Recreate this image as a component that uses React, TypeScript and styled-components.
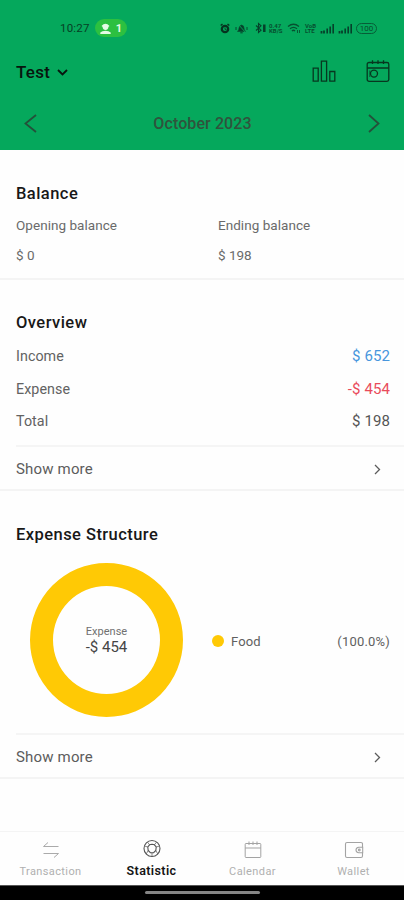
import React from "react";
import styled, { createGlobalStyle } from "styled-components";

const GlobalStyle = createGlobalStyle`
  * { box-sizing: border-box; }
  body { margin: 0; background: #fff; font-family: Roboto, "Liberation Sans", sans-serif; }
`;

const Screen = styled.div`
  width: 404px;
  height: 900px;
  display: flex;
  flex-direction: column;
  background: #fefefe;
  color: #555;
  overflow: hidden;
`;

const Header = styled.header`
  height: 150px;
  flex: none;
  background: #05a85c;
  color: #08150e;
`;

const StatusBar = styled.div`
  height: 48px;
  padding: 8px 27px 0 60px;
  display: flex;
  align-items: center;
`;

const Clock = styled.span`
  width: 35px;
  font-size: 11.5px;
  letter-spacing: 0.2px;
  color: #073f25;
`;

const Pill = styled.span`
  display: flex;
  align-items: center;
  justify-content: center;
  gap: 5px;
  width: 32px;
  height: 18px;
  border-radius: 9px;
  background: #2cc040;
  color: #e4fbe5;
  font-size: 11px;
  font-weight: 700;
`;

const StatusIcons = styled.div`
  margin-left: auto;
  display: flex;
  align-items: center;
`;

const StatusSlot = styled.span<{ $w: number }>`
  width: ${(p) => p.$w}px;
  height: 12px;
  display: flex;
  align-items: center;
`;

const TinyText = styled.span`
  font-size: 6px;
  line-height: 5.5px;
  font-weight: 700;
  color: #075030;
  white-space: nowrap;
`;

const Battery = styled.span`
  width: 21px;
  height: 11px;
  border: 1px solid #075d37;
  border-radius: 5.5px;
  font-size: 8px;
  line-height: 9px;
  text-align: center;
  color: #074b2c;
`;

const Toolbar = styled.div`
  height: 48px;
  padding: 0 14px 0 16px;
  display: flex;
  align-items: center;
`;

const AccountName = styled.span`
  font-size: 17px;
  font-weight: 500;
  letter-spacing: 0.3px;
  margin-right: 7px;
`;

const ToolbarActions = styled.div`
  margin-left: auto;
  display: flex;
  gap: 30px;
`;

const MonthBar = styled.div`
  height: 54px;
  padding: 1px 24px 0;
  display: flex;
  align-items: center;
  justify-content: space-between;
  color: #24513a;
`;

const Month = styled.span`
  font-size: 16px;
  font-weight: 500;
  letter-spacing: 0.1px;
  color: #30533d;
`;

const Section = styled.section<{ $h: number }>`
  height: ${(p) => p.$h}px;
  flex: none;
  border-bottom: 2px solid #f4f4f4;
  display: flex;
  flex-direction: column;
`;

const Title = styled.h2<{ $top: number; $spacing: number }>`
  margin: ${(p) => p.$top}px 0 0 16px;
  font-size: 16.5px;
  line-height: 20px;
  font-weight: 500;
  letter-spacing: ${(p) => p.$spacing}px;
  color: #181818;
`;

const Balances = styled.div`
  margin: 11px 0 0 16px;
  display: grid;
  grid-template-columns: 202px 1fr;
  row-gap: 10px;
  font-size: 13.5px;
  line-height: 20px;
  color: #6a6a6a;
`;

const BalanceLabel = styled.span`
  letter-spacing: 0.04px;
`;

const Lines = styled.div`
  padding: 7px 14px 0 16px;
  flex: 1;
`;

const Line = styled.div`
  height: 32.6px;
  display: flex;
  align-items: center;
  justify-content: space-between;
  font-size: 14.3px;
  letter-spacing: 0.05px;
  color: #626262;
`;

const Amount = styled.span<{ $color: string }>`
  font-size: 15px;
  letter-spacing: 0.1px;
  color: ${(p) => p.$color};
`;

const ShowMore = styled.div`
  height: 44px;
  flex: none;
  margin-left: 16px;
  padding: 2px 23px 0 0;
  border-top: 2px solid #f5f5f5;
  display: flex;
  align-items: center;
  justify-content: space-between;
  font-size: 15px;
  letter-spacing: 0.17px;
  color: #5c5c5c;
`;

const ChartRow = styled.div`
  flex: 1;
  padding: 18px 14px 0 30px;
  display: flex;
  align-items: flex-start;
`;

const Donut = styled.div`
  width: 153px;
  height: 154px;
  border: 23px solid #ffc905;
  border-radius: 50%;
  display: flex;
  flex-direction: column;
  align-items: center;
  justify-content: center;
`;

const DonutLabel = styled.span`
  font-size: 11px;
  line-height: 14px;
  letter-spacing: 0.02px;
  color: #707070;
`;

const DonutValue = styled.span`
  font-size: 15px;
  line-height: 17px;
  color: #454545;
`;

const Legend = styled.div`
  flex: 1;
  height: 154px;
  padding: 2px 0 0 29px;
  display: flex;
  align-items: center;
  font-size: 13px;
  letter-spacing: 0.1px;
  color: #606060;
`;

const Dot = styled.span`
  width: 12px;
  height: 12px;
  margin-right: 7px;
  border-radius: 50%;
  background: #ffc905;
`;

const Percent = styled.span`
  margin-left: auto;
  letter-spacing: 0.2px;
`;

const Spacer = styled.div`
  flex: 1;
`;

const Nav = styled.nav`
  height: 54px;
  flex: none;
  border-top: 1px solid #f4f4f4;
  display: grid;
  grid-template-columns: repeat(4, 1fr);
`;

const NavItem = styled.div<{ $active?: boolean }>`
  display: flex;
  flex-direction: column;
  align-items: center;
  padding-top: ${(p) => (p.$active ? "7px" : "8px")};
  gap: 5px;
  font-size: ${(p) => (p.$active ? "12.5px" : "11px")};
  line-height: 16px;
  font-weight: ${(p) => (p.$active ? 600 : 400)};
  letter-spacing: 0.4px;
  color: ${(p) => (p.$active ? "#151515" : "#b0b0b0")};
`;

const HomeArea = styled.div`
  height: 15px;
  flex: none;
  background: #000;
  border-top: 1px solid #555;
  display: flex;
  justify-content: center;
  align-items: center;
  padding-bottom: 1px;
`;

const HomeBar = styled.div`
  width: 115px;
  height: 3px;
  border-radius: 2px;
  background: #858585;
`;

const Chevron = ({ w, h, left, down, stroke = 1.5 }: { w: number; h: number; left?: boolean; down?: boolean; stroke?: number }) => (
  <svg width={w} height={h} fill="none" stroke="currentColor" strokeWidth={stroke}>
    <path
      d={
        down
          ? `M1 1 L${w / 2} ${h - 1.5} L${w - 1} 1`
          : left
          ? `M${w - 1} 1 L1.5 ${h / 2} L${w - 1} ${h - 1}`
          : `M1 1 L${w - 1.5} ${h / 2} L1 ${h - 1}`
      }
    />
  </svg>
);

const PersonIcon = () => (
  <svg width="11" height="11" fill="currentColor">
    <path d="M1.5 3 Q5.5 -1.5 9.5 3 L8.5 3.8 Q8 7 5.5 7 Q3 7 2.5 3.8Z" />
    <path d="M0.3 11 V9.5 Q2 7.7 5.5 7.7 Q9 7.7 10.7 9.5 V11Z" />
  </svg>
);

const AlarmIcon = () => (
  <svg width="10" height="11" fill="none" stroke="#06331f">
    <circle cx="5" cy="6" r="3.2" strokeWidth="2.2" />
    <path d="M0.7 2.5 L2.5 1 M7.5 1 L9.3 2.5" strokeWidth="1.5" />
    <path d="M5 4.5 V6.4 H6.5" strokeWidth="0.8" />
  </svg>
);

const MuteIcon = () => (
  <svg width="13" height="11" fill="#06402a" stroke="#06402a">
    <path d="M2.5 8.5 Q4 7 4 5 Q4.2 2.3 6.5 2 Q9 2.3 9 5 Q9 7 10.5 8.5Z" strokeWidth="0.5" />
    <path d="M5.3 9.8 H7.7" />
    <path d="M3 1 L11 10" stroke="#05a85c" strokeWidth="0.9" />
    <path d="M1 4 V7 M12 4 V7" strokeWidth="0.9" />
  </svg>
);

const BluetoothIcon = () => (
  <svg width="11" height="12" fill="none" stroke="#06402a">
    <path d="M1 3.5 L6 8.2 L3.5 10.5 V1.5 L6 3.8 L1 8.5" strokeWidth="1.1" />
    <path d="M9.3 2.5 V10" strokeWidth="2.5" />
  </svg>
);

const WifiIcon = () => (
  <svg width="14" height="11" fill="none" stroke="#075030">
    <path d="M1 3.5 Q6.5 -1 12 3.5 M3 5.8 Q6.5 2.8 10 5.8 M5 8 Q6.5 6.5 8 8" strokeWidth="1.3" />
    <path d="M10.5 7 V10 M12.5 7 V10" strokeWidth="0.9" />
  </svg>
);

const SignalIcon = () => (
  <svg width="15" height="11" fill="none" stroke="#06402a">
    <path d="M1.5 8 V10.5 M4 7.5 V10.5" strokeWidth="1.8" />
    <path d="M7.2 5.5 V10.5 M10.2 3.5 V10.5 M13.2 1 V10.5" strokeWidth="1.6" />
  </svg>
);

const BarsIcon = () => (
  <svg width="24" height="24" fill="none" stroke="#07371f" strokeWidth="1.3">
    <path d="M1.2 8.2 H6.2 V21.2 H1.2Z M9.4 1.2 H14.6 V21.2 H9.4Z M17.8 11.5 H22.8 V21.2 H17.8Z" />
  </svg>
);

const ScheduleIcon = () => (
  <svg width="24" height="24" fill="none" stroke="#07371f" strokeWidth="1.3">
    <rect x="1.2" y="2.5" width="21.6" height="18.8" rx="1.8" />
    <path d="M1.2 8 H22.8 M6.5 0.3 V4 M12 0.3 V4 M17.5 0.3 V4" />
    <circle cx="8" cy="13.6" r="3.5" />
    <path d="M3.8 10.5 V17" strokeWidth="0.7" />
  </svg>
);

const TransferIcon = () => (
  <svg width="18" height="19" fill="none" stroke="#aaa" strokeWidth="1">
    <path d="M16.5 6.5 H1.5 L6 2.5 M1.5 13.5 H16.5 L12 17.5" />
  </svg>
);

const StatisticIcon = () => (
  <svg width="18" height="19" fill="none" stroke="#555" strokeWidth="1.1">
    <circle cx="9" cy="9.5" r="8" />
    <path d="M9 5.2 L11.4 5.8 L13.2 8 L12.8 11.5 L10.6 13.7 H7.4 L5.2 11.5 L4.8 8 L6.6 5.8Z" />
    <path d="M6.6 5.8 L4.5 3.2 M11.4 5.8 L13.5 3.2 M13.2 8 L16.6 7 M12.8 11.5 L14.8 15 M9 13.7 V17.3 M5.2 11.5 L3.2 15 M4.8 8 L1.4 7" strokeWidth="0.7" />
  </svg>
);

const CalendarIcon = () => (
  <svg width="18" height="19" fill="none" stroke="#a3a3a3" strokeWidth="1">
    <rect x="1.2" y="3.5" width="15.6" height="14" rx="0.8" />
    <path d="M1.2 8 H16.8 M5 1.5 V5 M9 1.5 V5 M13 1.5 V5" />
  </svg>
);

const WalletIcon = () => (
  <svg width="20" height="19" fill="none" stroke="#a3a3a3" strokeWidth="1.1">
    <path d="M18.5 7 V3.5 Q18.5 2.5 17 2.5 H3 Q1.5 2.5 1.5 4 V16 Q1.5 17.5 3 17.5 H17 Q18.5 17.5 18.5 16 V13" />
    <path d="M18.7 7.2 H14.8 Q12 7.5 12 10 Q12 12.5 14.8 12.8 H18.7Z" />
    <circle cx="15.3" cy="10" r="0.9" />
  </svg>
);

const overview = [
  { label: "Income", value: "$ 652", color: "#4796dd" },
  { label: "Expense", value: "-$ 454", color: "#e94b5b" },
  { label: "Total", value: "$ 198", color: "#555" },
];

export default function App() {
  return (
    <Screen>
      <GlobalStyle />
      <Header>
        <StatusBar>
          <Clock>10:27</Clock>
          <Pill><PersonIcon />1</Pill>
          <StatusIcons>
            <StatusSlot $w={15}><AlarmIcon /></StatusSlot>
            <StatusSlot $w={20}><MuteIcon /></StatusSlot>
            <StatusSlot $w={14}><BluetoothIcon /></StatusSlot>
            <StatusSlot $w={18}><TinyText>0.47<br />KB/S</TinyText></StatusSlot>
            <StatusSlot $w={18}><WifiIcon /></StatusSlot>
            <StatusSlot $w={15}><TinyText>VoB<br />LTE</TinyText></StatusSlot>
            <StatusSlot $w={18}><SignalIcon /></StatusSlot>
            <StatusSlot $w={18}><SignalIcon /></StatusSlot>
            <Battery>100</Battery>
          </StatusIcons>
        </StatusBar>
        <Toolbar>
          <AccountName>Test</AccountName>
          <Chevron w={11} h={7} down stroke={1.8} />
          <ToolbarActions>
            <BarsIcon />
            <ScheduleIcon />
          </ToolbarActions>
        </Toolbar>
        <MonthBar>
          <Chevron w={13} h={19} left stroke={1.8} />
          <Month>October 2023</Month>
          <Chevron w={12} h={19} stroke={1.8} />
        </MonthBar>
      </Header>

      <Section $h={130}>
        <Title $top={34} $spacing={0.45}>Balance</Title>
        <Balances>
          <BalanceLabel>Opening balance</BalanceLabel>
          <BalanceLabel>Ending balance</BalanceLabel>
          <span>$ 0</span>
          <span>$ 198</span>
        </Balances>
      </Section>

      <Section $h={211}>
        <Title $top={33} $spacing={0.45}>Overview</Title>
        <Lines>
          {overview.map((item) => (
            <Line key={item.label}>
              <span>{item.label}</span>
              <Amount $color={item.color}>{item.value}</Amount>
            </Line>
          ))}
        </Lines>
        <ShowMore>Show more<Chevron w={7} h={11} stroke={1.3} /></ShowMore>
      </Section>

      <Section $h={288}>
        <Title $top={34} $spacing={0.45}>Expense Structure</Title>
        <ChartRow>
          <Donut>
            <DonutLabel>Expense</DonutLabel>
            <DonutValue>-$ 454</DonutValue>
          </Donut>
          <Legend>
            <Dot />
            <span>Food</span>
            <Percent>(100.0%)</Percent>
          </Legend>
        </ChartRow>
        <ShowMore>Show more<Chevron w={7} h={11} stroke={1.3} /></ShowMore>
      </Section>

      <Spacer />
      <Nav>
        <NavItem><TransferIcon />Transaction</NavItem>
        <NavItem $active><StatisticIcon />Statistic</NavItem>
        <NavItem><CalendarIcon />Calendar</NavItem>
        <NavItem><WalletIcon />Wallet</NavItem>
      </Nav>
      <HomeArea><HomeBar /></HomeArea>
    </Screen>
  );
}
